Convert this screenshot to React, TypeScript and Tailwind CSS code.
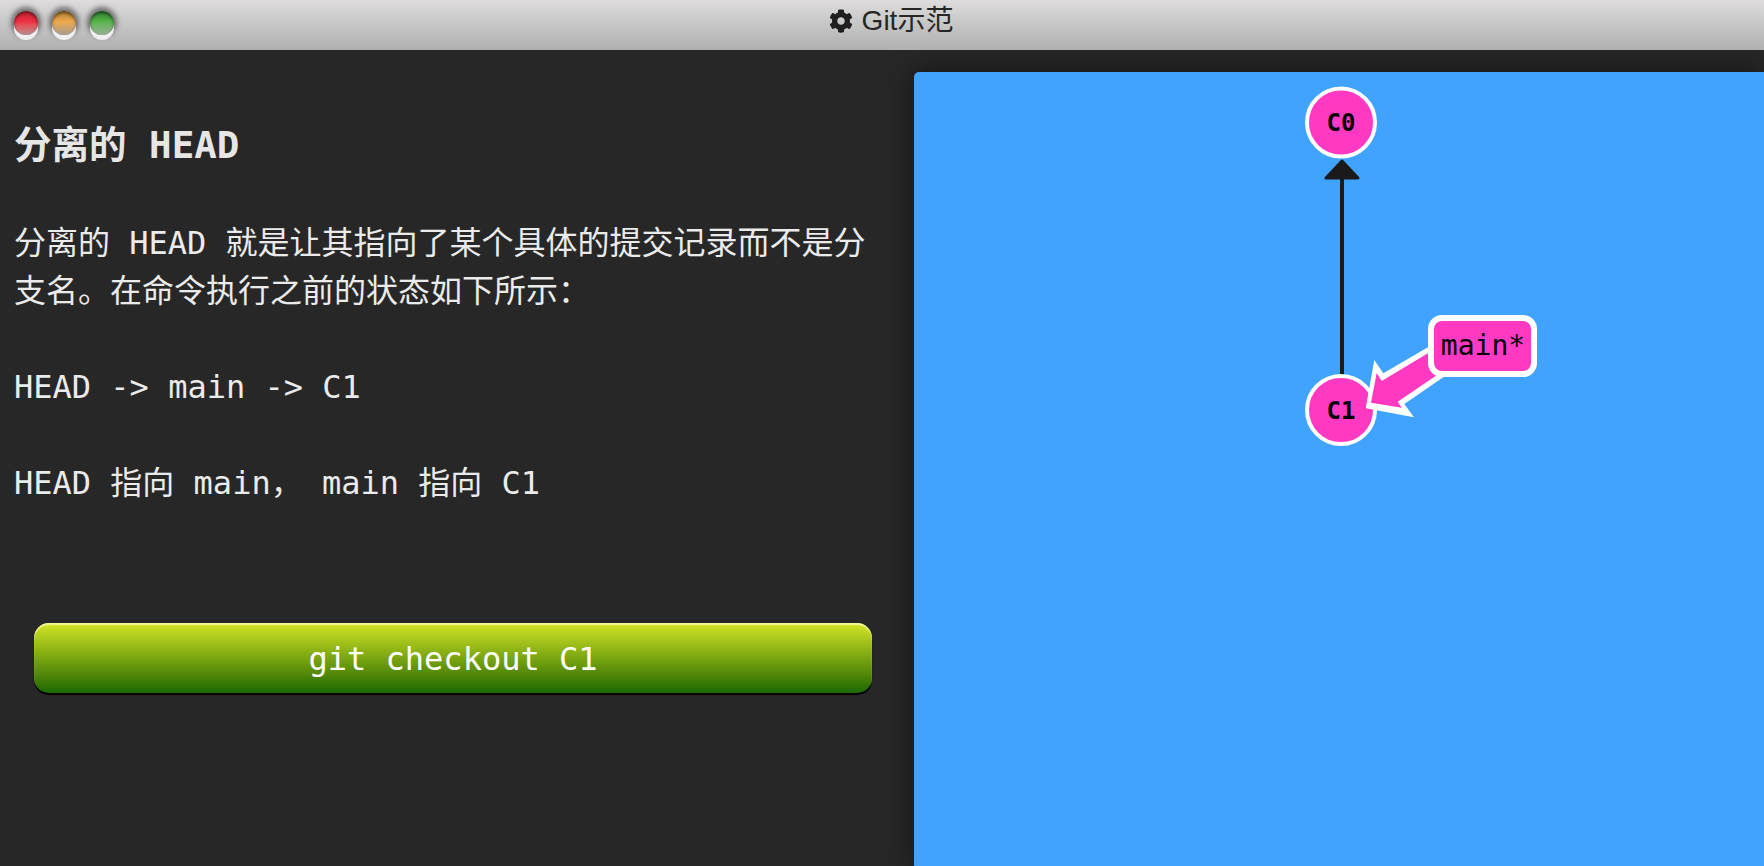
import React from "react";
import { FaCog } from "react-icons/fa";

const mono = { fontFamily: '"DejaVu Sans Mono","Noto Sans CJK SC",monospace' };

function Light({ cls }: { cls: string }) {
  return (
    <div
      className={
        "h-6 w-6 rounded-full shadow-[inset_0_2px_3px_rgba(0,0,0,0.5),0_5px_0_#efefef,0_-1px_5px_3px_rgba(50,50,50,0.6)] " +
        cls
      }
    />
  );
}

export default function App() {
  return (
    <div className="flex h-screen w-full flex-col overflow-hidden bg-[#272727]" style={mono}>
      <header className="relative flex h-[50px] shrink-0 items-start bg-gradient-to-b from-[#dedcdd] to-[#b0b0b0] pl-[14px] pt-[11px]">
        <div className="flex gap-[14px]">
          <Light cls="bg-gradient-to-b from-[#c4222f] via-[#ee3044] via-45% to-[#b98a8e]" />
          <Light cls="bg-gradient-to-b from-[#b07c30] via-[#eeaa4c] via-45% to-[#a89c8a]" />
          <Light cls="bg-gradient-to-b from-[#2c8030] via-[#58b44a] via-45% to-[#9aae98]" />
        </div>
        <div
          className="absolute inset-x-0 top-0 flex h-[41px] items-center justify-center gap-[9px] pl-[18px] text-[28px] leading-none text-[#262626]"
          style={{ fontFamily: '"Liberation Sans","Noto Sans CJK SC",sans-serif' }}
        >
          <FaCog className="h-6 w-6 text-[#1f1f1f]" />
          <span>Git示范</span>
        </div>
      </header>

      <main className="flex min-h-0 flex-1">
        <section className="w-[914px] shrink-0 pl-[14px] pr-[30px] pt-[68px] text-[32px] leading-[48px] text-[#ebebeb]">
          <h1 className="mb-[47px] text-[37.5px] font-bold leading-[54px] text-[#e6e6e6]">分离的 HEAD</h1>
          <p className="mb-12">分离的 HEAD 就是让其指向了某个具体的提交记录而不是分支名。在命令执行之前的状态如下所示：</p>
          <p className="mb-12">HEAD -&gt; main -&gt; C1</p>
          <p className="whitespace-pre">HEAD 指向 main， main 指向 C1</p>
          <button className="ml-5 mt-[116px] flex h-[70px] w-[838px] items-center justify-center rounded-[15px] bg-gradient-to-b from-[#d4e626] to-[#186800] pt-[2px] text-[32px] text-white shadow-[inset_0_2px_1px_rgba(255,255,190,0.75),0_2px_1px_#000]">
            git checkout C1
          </button>
        </section>

        <section className="mt-[22px] flex-1 rounded-tl-[5px] bg-[#3fa3ff] shadow-[0_0_28px_rgba(0,0,0,0.55)]">
          <svg width="850" height="794" viewBox="914 72 850 794" className="block">
            <line x1="1342" y1="376" x2="1342" y2="176" stroke="#1a1a1a" strokeWidth="4" />
            <path d="M1342 161 L1358 178 L1326 178 Z" fill="#1a1a1a" stroke="#1a1a1a" strokeWidth="3" strokeLinejoin="round" />
            <circle cx="1341" cy="122.5" r="34" fill="#ff39c1" stroke="#fff" strokeWidth="4" />
            <circle cx="1341" cy="410" r="34" fill="#ff39c1" stroke="#fff" strokeWidth="4" />
            <text x="1341" y="131" textAnchor="middle" fontSize="24" fontWeight="700" fill="#000" style={mono}>C0</text>
            <text x="1341" y="419" textAnchor="middle" fontSize="24" fontWeight="700" fill="#000" style={mono}>C1</text>
            <path d="M1430 346 L1383.3 373.3 L1374.3 360 L1365.7 408.3 L1414 417.3 L1404.3 404 L1448 374 Z" fill="#fff" />
            <path d="M1430 352 L1381.7 381 L1376.7 373 L1371 402.7 L1401.7 407.7 L1397.7 401.7 L1440 373 Z" fill="#ff39c1" />
            <rect x="1431" y="318" width="103" height="56" rx="11" fill="#ff39c1" stroke="#fff" strokeWidth="6" />
            <text x="1483" y="355" textAnchor="middle" fontSize="28" fill="#000" style={mono}>main*</text>
          </svg>
        </section>
      </main>
    </div>
  );
}
